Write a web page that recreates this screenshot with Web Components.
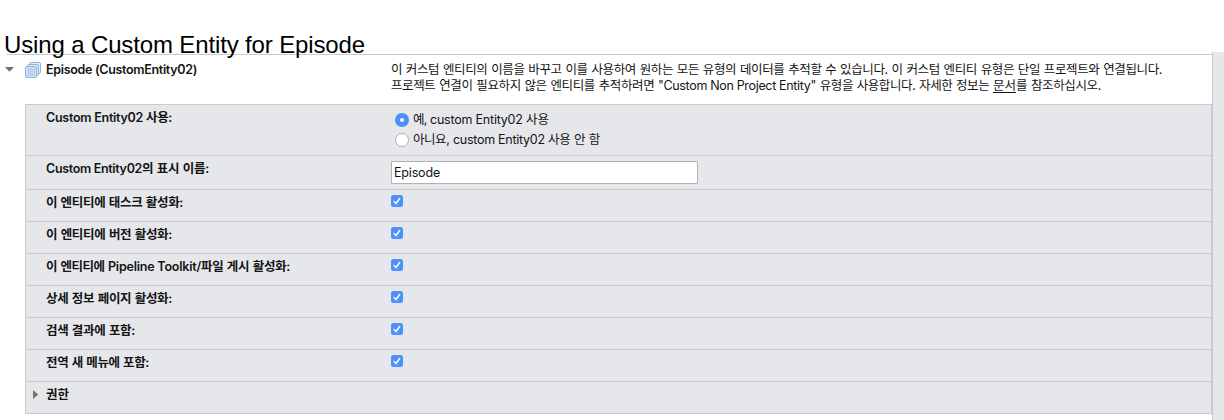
<!DOCTYPE html>
<html lang="ko"><head><meta charset="utf-8"><title>Custom Entity</title>
<style>
body{margin:0;background:#fff;overflow:hidden;font-family:Inter,"Noto Sans CJK KR",sans-serif;color:#141414}
</style></head><body>
<entity-page></entity-page>
<script>
const define=(name,html,init)=>customElements.define(name,class extends HTMLElement{
  connectedCallback(){
    if(this.shadowRoot)return;
    const t=document.createElement('template');t.innerHTML=html;
    this.attachShadow({mode:'open'}).append(t.content.cloneNode(true));
    if(init)init(this);
  }
});
// Inline run of text whose tracking is adjusted to a given advance width.
define('text-run',`<style>:host{display:inline-block;white-space:pre;font-size:12.5px;line-height:16px;word-spacing:.6px;vertical-align:baseline}
:host([latin]){word-spacing:0;font-family:Inter,sans-serif}
:host([title]){font:24px/28px "Liberation Sans",sans-serif;color:#000;word-spacing:0}
:host([link]){text-decoration:underline;text-underline-offset:2px}</style><slot></slot>`,el=>{
  const w=+el.getAttribute('w'),n=[...el.textContent].length;
  if(w)el.style.letterSpacing=((w-el.getBoundingClientRect().width)/n)+'px';
});
define('check-box',`<style>:host{display:block;width:12px;height:12px}svg{display:block}</style>
<svg width="12" height="12"><rect width="12" height="12" rx="2.5" fill="#4d90fa"/><path d="M3.2 6.5 5.1 8.5 8.6 3.5" fill="none" stroke="#fff" stroke-width="1.5" stroke-linecap="round"/></svg>`);
define('radio-option',`<style>:host{display:flex;height:20px;align-items:center;padding-left:4px}i{box-sizing:border-box;width:14px;height:14px;border-radius:50%;background:#fff;border:1px solid #b0b0b2;margin-right:4px}
:host([checked]) i{border:5px solid #4d90fa}
span{white-space:pre;line-height:16px;font-size:12.5px;display:flex;align-items:baseline}</style><i></i><span><slot></slot></span>`);
define('text-field',`<style>:host{display:flex;align-items:center;box-sizing:border-box;width:307px;height:23px;border:1px solid #b1b2b6;border-radius:1px;background:#fff;padding-left:2px}</style><slot></slot>`);
define('setting-row',`<style>:host{display:grid;grid-template-columns:365px 1fr;box-sizing:border-box;height:var(--h,32px);border-top:1px solid #c9cacd}
.l{padding:5px 0 0 20px;font-weight:600;white-space:pre;line-height:16px;font-size:12.5px;position:relative;display:flex;align-items:baseline;align-self:start}
.c{padding-top:5px}svg{display:none}:host([closed]) svg{display:block;position:absolute;left:7px;top:8px}</style>
<div class="l"><svg width="6" height="9"><path d="M0 0 5.3 4.5 0 9z" fill="#757578"/></svg><slot name="label"></slot></div><div class="c"><slot></slot></div>`);
define('layers-icon',`<style>:host{display:block;width:16px;height:16px}svg{display:block}</style>
<svg width="16" height="16"><g stroke="#8fb4dc" stroke-width="1"><rect x="4.5" y=".5" width="11" height="11" rx="1.5" fill="#e3eefa"/><rect x="2.5" y="2.5" width="11" height="11" rx="1.5" fill="#dae8f7"/><rect x=".5" y="4.5" width="11" height="11" rx="1.5" fill="#d3e3f5"/></g><rect x="2" y="6" width="8" height="8" fill="#b9d2ee"/></svg>`);
define('entity-header',`<style>:host{display:grid;grid-template-columns:20px 20px 345px 1fr;height:49px;margin-left:6px;border-top:1px solid #c9cacd}
.a{padding-top:12px}.i{padding-top:7px}.n{padding-top:7px;font-weight:600;line-height:16px;font-size:12.5px}.d{padding-top:7px;font-size:12.5px}
.d div{height:16px;line-height:16px;white-space:pre;display:flex;align-items:baseline}svg{display:block}</style>
<div class="a"><svg width="9" height="5" style="margin-left:-1px"><path d="M0 0h9L4.5 4.8z" fill="#707073"/></svg></div>
<div class="i"><layers-icon style="margin-left:-1px"></layers-icon></div>
<div class="n"><text-run latin w="151">Episode (CustomEntity02)</text-run></div>
<div class="d"><div><text-run w="771">이 커스텀 엔티티의 이름을 바꾸고 이를 사용하여 원하는 모든 유형의 데이터를 추적할 수 있습니다. 이 커스텀 엔티티 유형은 단일 프로젝트와 연결됩니다.</text-run></div>
<div><text-run w="267">프로젝트 연결이 필요하지 않은 엔티티를 추적하려면 </text-run><text-run latin w="158">"Custom Non Project Entity"</text-run><text-run w="177"> 유형을 사용합니다. 자세한 정보는 </text-run><text-run link w="23">문서</text-run><text-run w="85">를 참조하십시오.</text-run></div></div>`);
define('settings-panel',`<style>:host{display:block;box-sizing:border-box;margin-left:25px;width:1187px;height:310px;background:#e6e7eb;border:solid #c9cacd;border-width:0 1px 1px}</style><slot></slot>`);
const row=(label,extra='<check-box></check-box>')=>`<setting-row><span slot="label">${label}</span>${extra}</setting-row>`;
define('entity-page',`<style>:host{display:grid;grid-template-columns:1212px 12px;height:420px}
aside{margin-top:52px;background:#e6e7eb;border-left:1px solid #c9cacd}
header{height:54px;box-sizing:border-box;padding:31px 0 0 4px}</style>
<main><header><text-run title w="361">Using a Custom Entity for Episode</text-run></header>
<entity-header></entity-header>
<settings-panel>
<setting-row style="--h:51px"><span slot="label"><text-run latin w="100">Custom Entity02 </text-run><text-run w="26">사용:</text-run></span>
<radio-option checked><text-run w="17">예, </text-run><text-run latin w="96">custom Entity02 </text-run><text-run w="23">사용</text-run></radio-option>
<radio-option><text-run w="40">아니요, </text-run><text-run latin w="95">custom Entity02 </text-run><text-run w="52">사용 안 함</text-run></radio-option></setting-row>
<setting-row style="--h:34px"><span slot="label"><text-run latin w="96">Custom Entity02</text-run><text-run w="67">의 표시 이름:</text-run></span><text-field><text-run latin w="46">Episode</text-run></text-field></setting-row>
${row('<text-run w="137">이 엔티티에 태스크 활성화:</text-run>')}
${row('<text-run w="126">이 엔티티에 버전 활성화:</text-run>')}
${row('<text-run w="62">이 엔티티에 </text-run><text-run latin w="93">Pipeline Toolkit/</text-run><text-run w="89">파일 게시 활성화:</text-run>')}
${row('<text-run w="126">상세 정보 페이지 활성화:</text-run>')}
${row('<text-run w="89">검색 결과에 포함:</text-run>')}
${row('<text-run w="103">전역 새 메뉴에 포함:</text-run>')}
<setting-row closed><span slot="label"><text-run w="23">권한</text-run></span></setting-row>
</settings-panel></main><aside></aside>`);
</script></body></html>
